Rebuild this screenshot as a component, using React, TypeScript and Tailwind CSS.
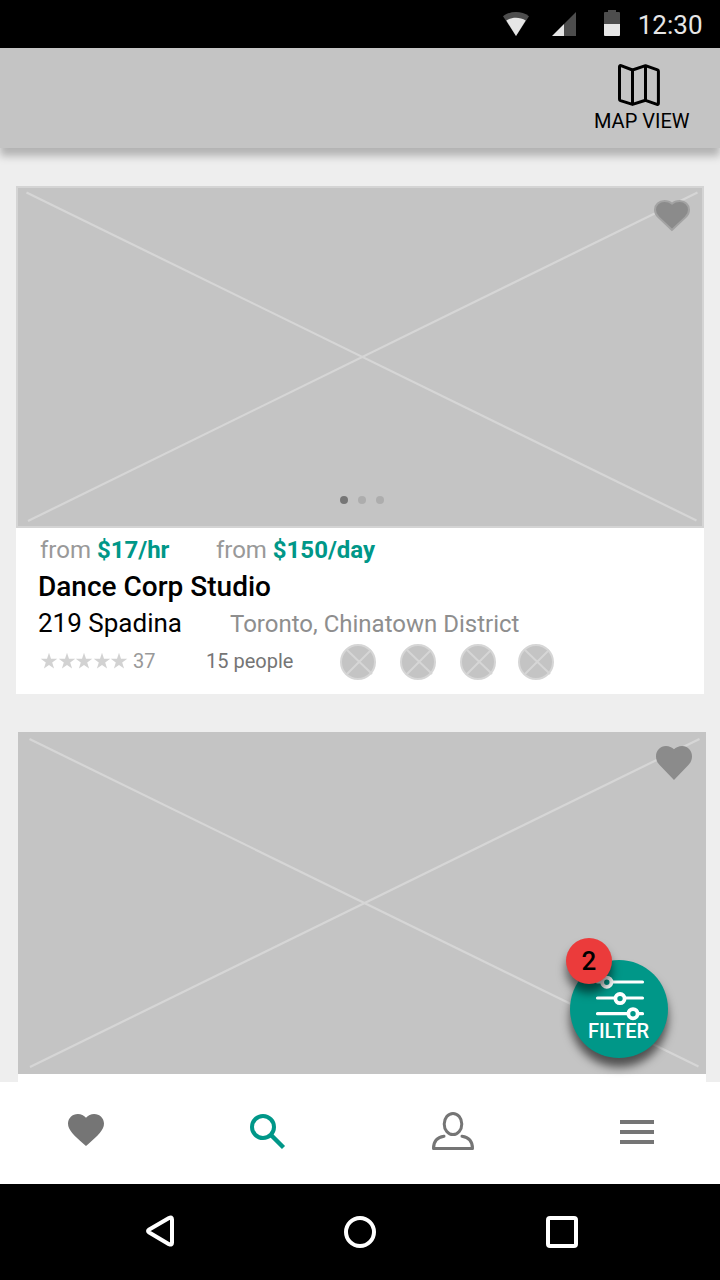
import type { ReactNode } from "react";

const HEART =
  "M10 18.35l-1.45-1.32C3.4 12.36 0 9.28 0 5.5 0 2.42 2.42 0 5.5 0c1.74 0 3.41.81 4.5 2.09C11.09.81 12.76 0 14.5 0 17.58 0 20 2.42 20 5.5c0 3.78-3.4 6.86-8.55 11.54L10 18.35z";

const WIDE_HEART =
  "M10 18.35L2 10.2C.7 8.900 0 7.500 0 5.500 0 2.420 2.420 0 5.500 0c1.740 0 3.500.700 4.500 1.700C11 .700 12.760 0 14.500 0 17.580 0 20 2.420 20 5.500c0 2-.7 3.400-2 4.700z";

function StatusBar() {
  return (
    <header className="flex h-12 shrink-0 items-start justify-end bg-black pr-[17.5px]">
      <svg width="120" height="48" viewBox="500 0 120 48" fill="#e6e6e6">
        <path d="M503 16.2C510.5 10.6 521.5 10.6 529 16.2L516 36z" fill="#4d4d4d" />
        <path d="M506.3 20.5C512 16.8 520 16.8 525.7 20.5L516 36z" />
        <path d="M576 12V36H564V24z" fill="#4d4d4d" />
        <path d="M564 24V36H552z" />
        <path d="M608 10h8v2h3a1 1 0 0 1 1 1v11h-16V13a1 1 0 0 1 1-1h3z" fill="#4d4d4d" />
        <path d="M604 24h16v11a1 1 0 0 1-1 1h-14a1 1 0 0 1-1-1z" />
      </svg>
      <span className="ml-[17.5px] pt-[1px] text-[26px] leading-[48px] text-[#e6e6e6]">12:30</span>
    </header>
  );
}

function AppBar() {
  return (
    <div className="z-10 flex h-[100px] shrink-0 justify-end bg-[#c4c4c4] pr-[30.5px] shadow-[0_8px_8px_rgba(0,0,0,0.25)]">
      <button className="flex flex-col items-center pt-4 text-black">
        <svg width="42" height="42" viewBox="0 0 42 42" fill="none" stroke="#000" strokeWidth="3" strokeLinejoin="round" className="mr-[5px]">
          <path d="M3 1.7L14.5 6L27.5 1.7L39.5 5.8Q40.4 6.2 40.4 7.2V39.2Q40.4 40.8 39 40.3L27.5 36.3L14.5 40.4L2.5 36.6Q1.5 36.2 1.5 35.2V2.7Q1.5 1.2 3 1.7zM14.5 6V40.4M27.5 1.7V36.3" />
        </svg>
        <span className="mt-[3px] text-[20px] leading-6 whitespace-nowrap">MAP VIEW</span>
      </button>
    </div>
  );
}

function Photo({ className, children }: { className: string; children: ReactNode }) {
  return (
    <div className={`relative h-[342px] w-[688px] bg-[#c4c4c4] ${className}`}>
      {children}
    </div>
  );
}

function PriceTag({ price }: { price: string }) {
  return (
    <p className="text-[24px] text-[#999]">
      from <span className="font-bold text-[#009788]">{price}</span>
    </p>
  );
}

function Amenity() {
  return (
    <svg width="36" height="36" viewBox="0 0 36 36" fill="none" stroke="#d6d6d6" strokeWidth="2">
      <circle cx="18" cy="18" r="17" fill="#c4c4c4" />
      <path d="M7 6L32 30M7 30L31 6" />
    </svg>
  );
}

function Stars() {
  return (
    <div className="flex gap-[1.5px]">
      {[0, 1, 2, 3, 4].map((i) => (
        <svg key={i} width="16" height="16" viewBox="0 0 16 16" fill="#d2d2d2" className="overflow-visible">
          <path d="M8 -0.3L10 5.7H16.3L11.2 9.4L13.1 15.6L8 11.9L2.9 15.6L4.8 9.4L-0.3 5.7H6z" />
        </svg>
      ))}
    </div>
  );
}

function StudioCard() {
  return (
    <article className="ml-4 h-[508px] w-[688px] bg-white">
      <Photo className="flex items-end justify-center border-2 border-[#d4d4d4] pb-[22px]">
        <svg width="688" height="342" viewBox="0 0 688 342" stroke="#d6d6d6" strokeWidth="2.2" className="absolute -top-[2px] -left-[2px]">
          <path d="M10.5 6.5L680.5 334.5M12 335L681.5 6.5" />
        </svg>
        <svg viewBox="0 0 20 18.35" preserveAspectRatio="none" className="absolute top-[13px] right-[13px] h-[29px] w-[34px] overflow-visible text-[#8b8b8b]">
          <path d={WIDE_HEART} fill="currentColor" stroke="#a3a3a3" strokeWidth="1.2" />
        </svg>
        <div className="mr-[-4px] flex gap-[10px]">
          <span className="size-2 rounded-full bg-[#767676]" />
          <span className="size-2 rounded-full bg-[#adadad]" />
          <span className="size-2 rounded-full bg-[#adadad]" />
        </div>
      </Photo>
      <div className="px-[22px]">
        <div className="flex h-11 items-center gap-[46.5px] pl-[2px]">
          <PriceTag price="$17/hr" />
          <PriceTag price="$150/day" />
        </div>
        <h2 className="h-[30px] text-[28px] leading-[30px] font-medium text-black">Dance Corp Studio</h2>
        <div className="flex h-[42px] items-center">
          <span className="w-[192px] text-[26px] text-black">219 Spadina</span>
          <span className="pt-[2px] text-[24px] text-[#8e8e8e]">Toronto, Chinatown District</span>
        </div>
        <div className="flex h-9 items-center pl-[3px] text-[20px] leading-[34px]">
          <div className="pb-[2px]">
            <Stars />
          </div>
          <span className="ml-[6px] w-[73px] pb-[2px] text-[#999]">37</span>
          <span className="w-[134px] pb-[2px] text-[#757575]">15 people</span>
          <div className="flex gap-6">
            <Amenity />
            <Amenity />
            <Amenity />
            <span className="-ml-[2px]">
              <Amenity />
            </span>
          </div>
        </div>
      </div>
    </article>
  );
}

function NextCard() {
  return (
    <article className="mt-[38px] ml-[18px] h-[400px] w-[688px] bg-white">
      <Photo className="">
        <svg width="688" height="342" viewBox="0 0 688 342" stroke="#d6d6d6" strokeWidth="2.2">
          <path d="M11.5 7L680.5 334.5M12 335L681.5 7" />
        </svg>
        <svg viewBox="0 0 20 18.35" preserveAspectRatio="none" className="absolute top-[14px] right-[14px] h-[34px] w-9 text-[#8b8b8b]">
          <path d={WIDE_HEART} fill="currentColor" />
        </svg>
      </Photo>
    </article>
  );
}

function FilterButton() {
  return (
    <button className="absolute top-[960px] left-[570px] z-20 flex size-[98px] flex-col items-center rounded-full bg-[#009788] pt-[16px] text-white shadow-[0_9px_10px_rgba(0,0,0,0.6)]">
      <svg width="48" height="44" viewBox="0 0 48 44" fill="#009788" stroke="#fff" strokeWidth="3.2" strokeLinecap="round" className="ml-[2px] overflow-visible">
        <path d="M1.5 6H46.5M1.5 22H46.5M1.5 37.7H46.5" />
        <g strokeWidth="3.8">
          <circle cx="10.8" cy="6.2" r="4.6" />
          <circle cx="24" cy="22.6" r="4.6" />
          <circle cx="37" cy="37.7" r="4.6" />
        </g>
      </svg>
      <span className="-ml-px text-[20px] leading-[22px] font-medium">FILTER</span>
      <span className="absolute -top-[22px] -left-1 flex size-[46px] items-center justify-center rounded-full bg-[#eb3b3b] text-[26px] font-medium text-black shadow-[0_9px_10px_rgba(0,0,0,0.55)]">
        2
      </span>
    </button>
  );
}

function TabBar() {
  return (
    <nav className="z-10 flex h-[102px] shrink-0 items-start bg-white text-[#757575]">
      <button className="mt-8 ml-[68px]">
        <svg viewBox="0 0 20 18.35" preserveAspectRatio="none" className="block h-8 w-9">
          <path d={HEART} fill="currentColor" />
        </svg>
      </button>
      <button className="mt-8 ml-[146px] text-[#009788]">
        <svg width="36" height="36" viewBox="0 0 36 36" fill="none" stroke="currentColor" strokeWidth="4">
          <circle cx="13" cy="13" r="11" />
          <path d="M21.5 21.5L33.5 33.5" strokeWidth="4.4" />
        </svg>
      </button>
      <button className="mt-[29px] ml-[146px]">
        <svg width="42" height="40" viewBox="0 0 42 40" fill="none" stroke="currentColor" strokeWidth="3" strokeLinecap="round" strokeLinejoin="round">
          <ellipse cx="21" cy="13" rx="8.8" ry="10.6" />
          <path d="M12 25.3C5 26.3 1.5 31 1.5 37.5H40.5C40.5 31 37 26.3 30 25.3" />
        </svg>
      </button>
      <button className="mt-[38px] ml-[146px] flex w-[34px] flex-col gap-[6px]">
        <span className="h-1 bg-[#757575]" />
        <span className="h-1 bg-[#757575]" />
        <span className="h-1 bg-[#757575]" />
      </button>
    </nav>
  );
}

function SystemBar() {
  return (
    <footer className="z-10 flex h-24 shrink-0 items-center bg-black pl-[144px]">
      <svg width="32" height="36" viewBox="0 0 32 36" fill="none" stroke="#fff" strokeWidth="4" strokeLinejoin="round">
        <path d="M4.8 15.8L25 4Q28 2.5 28 5.5V28.7Q28 31.5 25 30.2L4.8 18.2Q3.3 17 4.8 15.8z" />
      </svg>
      <span className="ml-[168px] size-8 rounded-full border-4 border-white" />
      <span className="ml-[170px] size-8 rounded-[4px] border-4 border-white" />
    </footer>
  );
}

export default function App() {
  return (
    <div className="relative flex h-[1280px] w-[720px] flex-col overflow-hidden bg-[#eee] font-[Roboto,sans-serif]">
      <StatusBar />
      <AppBar />
      <main className="min-h-0 flex-1 overflow-hidden pt-[38px]">
        <StudioCard />
        <NextCard />
      </main>
      <TabBar />
      <SystemBar />
      <FilterButton />
    </div>
  );
}
